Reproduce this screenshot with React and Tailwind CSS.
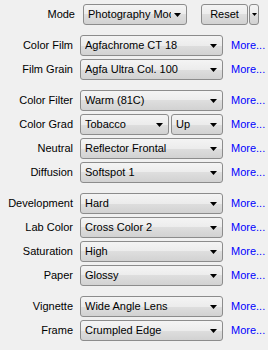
const groups = [
  [
    { label: 'Color Film', value: 'Agfachrome CT 18' },
    { label: 'Film Grain', value: 'Agfa Ultra Col. 100' },
  ],
  [
    { label: 'Color Filter', value: 'Warm (81C)' },
    { label: 'Color Grad', value: 'Tobacco', extra: 'Up' },
    { label: 'Neutral', value: 'Reflector Frontal' },
    { label: 'Diffusion', value: 'Softspot 1' },
  ],
  [
    { label: 'Development', value: 'Hard' },
    { label: 'Lab Color', value: 'Cross Color 2' },
    { label: 'Saturation', value: 'High' },
    { label: 'Paper', value: 'Glossy' },
  ],
  [
    { label: 'Vignette', value: 'Wide Angle Lens' },
    { label: 'Frame', value: 'Crumpled Edge' },
  ],
];

const face =
  'border border-[#8c8c8c] rounded-[3px] bg-[linear-gradient(#f4f4f4_0%,#ececec_50%,#dedede_50%,#d2d2d2_100%)]';

function Arrow({ small }) {
  return small ? (
    <svg width="5" height="3" viewBox="0 0 5 3" className="shrink-0">
      <path d="M0 0h5L2.5 3z" fill="#000" />
    </svg>
  ) : (
    <svg width="7" height="4" viewBox="0 0 7 4" className="shrink-0">
      <path d="M0 0h7L3.5 4z" fill="#000" />
    </svg>
  );
}

function Combo({ value, width }) {
  return (
    <div className={`${face} h-[21px] flex items-center pl-[4px] pr-[5px] overflow-hidden ${width}`}>
      <span className="flex-1 whitespace-nowrap overflow-hidden mr-[3px]">{value}</span>
      <Arrow />
    </div>
  );
}

function Row({ label, value, extra }) {
  return (
    <div className="flex items-center h-[21px]">
      <div className="w-[73px] text-right whitespace-nowrap">{label}</div>
      <div className="ml-[7px] flex gap-[2px]">
        {extra ? (
          <>
            <Combo value={value} width="w-[89px]" />
            <Combo value={extra} width="w-[52px]" />
          </>
        ) : (
          <Combo value={value} width="w-[143px]" />
        )}
      </div>
      <a className="ml-[8px] text-[#0000ff] whitespace-nowrap cursor-pointer">More...</a>
    </div>
  );
}

export default function App() {
  return (
    <div className="w-[268px] h-[350px] bg-[#f0f0f0] text-black text-[11px] leading-none pt-[4px] overflow-hidden"
         style={{ fontFamily: '"Liberation Sans", Arial, sans-serif' }}>

      <div className="flex items-center h-[21px]">
        <div className="w-[75px] text-right">Mode</div>
        <Combo value="Photography Mode" width="ml-[8px] w-[104px]" />
        <button className={`${face} ml-[14px] h-[21px] w-[47px] text-center`}>Reset</button>
        <button className={`${face} ml-[1px] h-[21px] w-[10px] flex items-center justify-center`}>
          <Arrow small />
        </button>
      </div>

      <div className="flex flex-col gap-[10px] mt-[10px]">
        {groups.map((rows, i) => (
          <div key={i} className="flex flex-col gap-[3px]">
            {rows.map(r => (
              <Row key={r.label} {...r} />
            ))}
          </div>
        ))}
      </div>
    </div>
  );
}
